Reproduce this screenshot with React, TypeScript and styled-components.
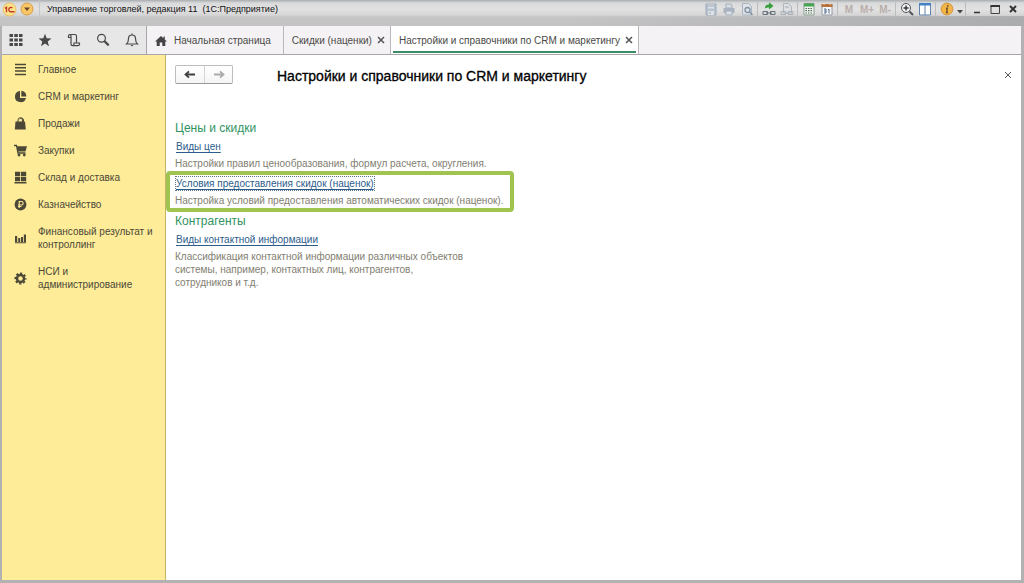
import React from "react";
import styled, { createGlobalStyle, css } from "styled-components";

const GlobalStyle = createGlobalStyle`
  * { box-sizing: border-box; }
  body {
    margin: 0;
    font-family: "Liberation Sans", Arial, sans-serif;
    font-size: 10px;
    line-height: 13px;
    color: #4a4a45;
    background: #ffffff;
  }
  button { font: inherit; color: inherit; border: 0; padding: 0; background: none; cursor: pointer; }
  svg { display: block; flex: none; }
`;

const Window = styled.div`
  min-height: 100vh;
  display: flex;
  flex-direction: column;
  border: solid #b3b1b1;
  border-width: 0 3px 3px 2px;
  background: #fff;
`;

const TitleBar = styled.header`
  height: 26px;
  flex: none;
  display: flex;
  align-items: flex-start;
  margin: 0 -3px 0 -2px;
  padding: 0 2px 0 0;
  background:
    linear-gradient(90deg, rgba(150, 152, 155, 0) 55%, rgba(130, 134, 138, 0.4) 100%) 0 16px / 100% 10px no-repeat,
    linear-gradient(#a9adaf 0, #d9dadb 3px, #e2e2e3 9px, #d6d6d7 15px, #c6c6c7 17px, #c3c3c4 26px);
`;

const AppButton = styled.button`
  width: 18px;
  height: 18px;
  display: grid;
  place-items: center;
`;

const AppTitle = styled.div`
  flex: 1;
  min-width: 0;
  margin-left: 3px;
  padding: 3px 0 0 7px;
  border-left: 1px solid #c4c5c7;
  height: 18px;
  font-size: 9px;
  color: #111;
  white-space: nowrap;
  overflow: hidden;
`;

const Tool = styled.button<{ $w?: number; $faded?: boolean }>`
  width: ${(p) => p.$w ?? 18}px;
  height: 18px;
  display: grid;
  place-items: center;
  font-weight: bold;
  color: ${(p) => (p.$faded ? "#b9aea9" : "#333")};
`;

const ToolSeparator = styled.span`
  width: 4px;
  height: 14px;
  margin-top: 2px;
  flex: none;
  background: linear-gradient(90deg, transparent 1px, #bcbdbf 1px, #bcbdbf 2px, transparent 2px);
`;

const TabBar = styled.nav`
  display: flex;
  height: 29px;
  flex: none;
  background: #f5f2f5;
  border-bottom: 1px solid #a9a5a9;
`;

const QuickTools = styled.div`
  display: flex;
  width: 145px;
  background: #e6e7e6;
  border-right: 1px solid #a5a5a5;
`;

const QuickButton = styled.button`
  flex: 1;
  display: grid;
  place-items: center;
  color: #484848;
`;

const Tab = styled.div<{ $active?: boolean }>`
  display: flex;
  align-items: center;
  gap: 5px;
  padding: 0 5px 0 8px;
  border-right: 1px solid #bbb7bb;
  white-space: nowrap;
  ${(p) =>
    p.$active &&
    css`
      background: linear-gradient(#3c8c67, #3c8c67) 2px 25px / calc(100% - 4px) 2px no-repeat, #fff;
    `}
`;

const TabLabel = styled.button<{ $home?: boolean }>`
  display: flex;
  align-items: center;
  gap: 7px;
  height: 28px;
  padding: 1px ${(p) => (p.$home ? "7px" : "0")} 0 0;
`;

const CloseButton = styled.button`
  width: 8px;
  height: 14px;
  display: grid;
  place-items: center;
  color: #555;
`;

const Body = styled.div`
  flex: 1;
  display: flex;
`;

const Sidebar = styled.nav`
  width: 164px;
  flex: none;
  padding-top: 1px;
  background: #feec98;
  border-right: 1px solid #c3b568;
`;

const SideItem = styled.a`
  display: flex;
  align-items: center;
  gap: 11px;
  padding: 7px 6px 7px 12px;
  color: #4b4838;
  text-decoration: none;
`;

const Main = styled.main`
  flex: 1;
  min-width: 0;
`;

const PageHeader = styled.div`
  display: flex;
  align-items: center;
  height: 39px;
  padding: 0 9px;
`;

const History = styled.div`
  display: flex;
  border: 1px solid #bdbdbd;
  border-bottom-color: #999;
  border-radius: 2px;
  background: linear-gradient(#fff, #f5f5f5);
`;

const HistoryButton = styled.button`
  width: 28px;
  height: 17px;
  display: grid;
  place-items: center;
  color: #3f3f3f;
  & + & { border-left: 1px solid #d5d5d5; }
  &:disabled { color: #aaa; }
`;

const PageTitle = styled.h1`
  flex: 1;
  margin: 2px 0 0 44px;
  font-size: 14px;
  line-height: 18px;
  font-weight: normal;
  color: #000;
  -webkit-text-stroke: 0.3px #000;
`;

const Sections = styled.div`
  padding-top: 26px;
`;

const SectionTitle = styled.h2`
  margin: 0 0 4px;
  padding-left: 9px;
  font-size: 12px;
  line-height: 16px;
  font-weight: normal;
  color: #31935f;
`;

const Entry = styled.div<{ $framed?: boolean }>`
  width: fit-content;
  max-width: 349px;
  padding: 0 9px 1px;
  ${(p) =>
    p.$framed &&
    css`
      padding: 2px 7px 1px 5px;
      border: 4px solid #a1c34f;
      border-radius: 4px;
      margin-bottom: 1px;
    `}
`;

const EntryLink = styled.a<{ $focused?: boolean }>`
  display: block;
  width: fit-content;
  margin: 0 0 4px 1px;
  color: #2c5c8c;
  text-decoration: underline;
  text-underline-offset: 2px;
  ${(p) => p.$focused && "outline: 1px dotted #60758a;"}
`;

const EntryText = styled.p<{ $narrow?: boolean }>`
  margin: 0;
  color: #827e70;
  ${(p) => p.$narrow && "max-width: 290px;"}
`;

const ICONS: Record<string, React.ReactNode> = {
  menu: <path d="M1 1.500h11M1 4.800h11M1 8.100h11M1 11.400h11" stroke="currentColor" strokeWidth="1.500" />,
  pie: (
    <>
      <path d="M6 1a5.600 5.600 0 1 0 6 7H6Z" fill="currentColor" />
      <path d="M7.300.8a5.200 5.200 0 0 1 5 5.600h-5Z" fill="currentColor" />
    </>
  ),
  bag: (
    <>
      <path d="M1.500 4.500h9.500l.8 8H.8Z" fill="currentColor" />
      <path d="M4 5V3a2.200 2.200 0 0 1 4.400 0v2M5.800 2a2 2 0 0 1 3.700 1V5" fill="none" stroke="currentColor" />
    </>
  ),
  cart: (
    <>
      <path d="M0 1.500h2.500l1.500 7.500h7.500" fill="none" stroke="currentColor" strokeWidth="1.300" />
      <path d="M3 2.300h10l-1.500 5.200H4Z" fill="currentColor" />
      <circle cx="5" cy="11" r="1.400" fill="currentColor" />
      <circle cx="10.300" cy="11" r="1.400" fill="currentColor" />
    </>
  ),
  stock: <path d="M1 .8h5.200v4.400H1ZM7 .8h5.200v4.400H7ZM1 6h5.200v4.200H1ZM7 6h5.200v4.200H7ZM.500 11h12v1.400H.500Z" fill="currentColor" />,
  ruble: (
    <>
      <circle cx="6.500" cy="6.500" r="5.900" fill="currentColor" />
      <path d="M5.200 10V3.500h2.200a1.700 1.700 0 0 1 0 3.500H4M4 8.500h3.500" fill="none" stroke="#feec98" strokeWidth="1.100" />
    </>
  ),
  bars: <path d="M1 4h2.200v6H1ZM4.200 6h2v4h-2ZM7 5h2v5H7ZM9.800 2.500H12V10H9.800ZM1 10.300h11v1H1Z" fill="currentColor" />,
  gear: (
    <>
      <circle cx="6.500" cy="6.500" r="3.500" fill="none" stroke="currentColor" strokeWidth="2.400" />
      <circle cx="6.500" cy="6.500" r="5.100" fill="none" stroke="currentColor" strokeWidth="1.900" strokeDasharray="2.200 1.805" strokeDashoffset="1.100" />
    </>
  ),
};

const SIDE_ITEMS: [string, string][] = [
  ["menu", "Главное"],
  ["pie", "CRM и маркетинг"],
  ["bag", "Продажи"],
  ["cart", "Закупки"],
  ["stock", "Склад и доставка"],
  ["ruble", "Казначейство"],
  ["bars", "Финансовый результат и контроллинг"],
  ["gear", "НСИ и администрирование"],
];

const Cross = ({ w = 1.5 }: { w?: number }) => (
  <svg width="8" height="8" viewBox="0 0 8 8">
    <path d="M1 1l6 6M7 1l-6 6" stroke="currentColor" strokeWidth={w} />
  </svg>
);

const Arrow = ({ flip }: { flip?: boolean }) => (
  <svg width="12" height="9" viewBox="0 0 12 9">
    <path
      d={flip ? "M1 4.500h9M7 1.300l3.500 3.200L7 7.700" : "M11 4.500H2M5 1.300L1.500 4.500 5 7.700"}
      fill="none"
      stroke="currentColor"
      strokeWidth="1.800"
    />
  </svg>
);

const Glyph = ({ children, size = 14 }: { children: React.ReactNode; size?: number }) => (
  <svg width={size} height={size} viewBox={`0 0 14 14`} fill="none">
    {children}
  </svg>
);

const WindowTools = () => (
  <>
    <Tool aria-label="Сохранить">
      <Glyph>
        <path d="M2 2h10v11H2Z" fill="#b8c3d0" stroke="#9caaba" />
        <path d="M4 2.500h6v4H4ZM4 9h6v4H4Z" fill="#dce1e6" />
        <path d="M4 4h6M5 11h2" stroke="#9caaba" />
      </Glyph>
    </Tool>
    <Tool aria-label="Печать">
      <Glyph>
        <path d="M4 2h5l1 1v3H4Z" fill="#d8dde3" stroke="#a5b0bd" />
        <path d="M1.500 6h11v5h-11Z" fill="#a9b4c0" />
        <path d="M4 9h6v4H4Z" fill="#dce1e6" stroke="#a5b0bd" />
      </Glyph>
    </Tool>
    <Tool aria-label="Предварительный просмотр">
      <Glyph>
        <path d="M2.500 1.500h6l3 3v8.500h-9Z" fill="#dfe3e7" stroke="#a9b4c0" />
        <circle cx="7.500" cy="8" r="2.500" stroke="#8292a4" strokeWidth="1.300" />
        <path d="M9.500 10l3 3" stroke="#8292a4" strokeWidth="1.500" />
      </Glyph>
    </Tool>
    <ToolSeparator />
    <Tool aria-label="Получить ссылку">
      <Glyph>
        <path d="M3 6.500c0-3.500 2-4 4-4V.3l4.500 3.700-4.500 3.500V5.500C5 5.500 4.500 5.500 3 6.500Z" fill="#35a03b" />
        <path d="M1 9.500h4.500v3H1ZM8.500 9.500H13v3H8.500ZM4 11h6" stroke="#66707a" />
      </Glyph>
    </Tool>
    <Tool aria-label="Перейти по ссылке">
      <Glyph>
        <path d="M3.500 1.500h5l3 3V11h-8Z" fill="#dcdfe2" stroke="#b1b7be" />
        <path d="M1 9.500h4.500v3H1ZM8.500 9.500H13v3H8.500ZM5 11h4M5 5h4" stroke="#a9b0b8" />
      </Glyph>
    </Tool>
    <ToolSeparator />
    <Tool aria-label="Калькулятор">
      <Glyph>
        <path d="M2 1.500h10V13H2Z" fill="#f0f4ee" stroke="#8b9d90" />
        <path d="M2 1.500h10v3H2Z" fill="#45a552" />
        <path d="M3.500 6.500h7M3.500 8.700h7M3.500 11h7" stroke="#4e6b5a" strokeWidth="1.200" strokeDasharray="1.500 1" />
      </Glyph>
    </Tool>
    <Tool aria-label="Календарь">
      <Glyph>
        <path d="M2 2.500h10V13H2Z" fill="#f6f7f8" stroke="#9299a3" />
        <path d="M1.500 2h11v3h-11Z" fill="#b8703b" />
        <path d="M4 1v2M10 1v2" stroke="#edd3bd" />
        <path d="M4 7h2v4M4 9h2M4 11h2M8 8l1-1v4.500" stroke="#506a8d" />
      </Glyph>
    </Tool>
    <ToolSeparator />
    <Tool $faded>M</Tool>
    <Tool $faded>M+</Tool>
    <Tool $faded>M-</Tool>
    <ToolSeparator />
    <Tool aria-label="Масштаб">
      <Glyph>
        <circle cx="6" cy="6" r="4.500" fill="#f2f4f5" stroke="#4e5357" />
        <path d="M3.500 6h5M6 3.500v5" stroke="#333" strokeWidth="1.400" />
        <path d="M9.500 9.500l3.500 3.500" stroke="#4e5357" strokeWidth="2" />
      </Glyph>
    </Tool>
    <Tool aria-label="Панели">
      <Glyph>
        <path d="M1.500 1.500h11V13h-11Z" fill="#fff" stroke="#5f83ad" />
        <path d="M1 1h12v2.500H1Z" fill="#4683c4" />
        <path d="M7 3v10" stroke="#5f83ad" />
      </Glyph>
    </Tool>
    <ToolSeparator />
    <Tool aria-label="Справка">
      <Glyph>
        <circle cx="7" cy="7" r="5.900" fill="#f3b548" stroke="#d2943a" />
        <path d="M7.800 3v1.700M6 6.200h1.300L6.600 10.500H8" stroke="#6e532a" strokeWidth="1.400" />
      </Glyph>
    </Tool>
    <Tool $w={8} aria-label="Ещё">
      <svg width="6" height="9" viewBox="0 0 6 9">
        <path d="M0 5h6L3 8.500Z" fill="#444" />
      </svg>
    </Tool>
    <ToolSeparator />
    <Tool aria-label="Свернуть">
      <Glyph><path d="M4 10.500h6" stroke="#333" strokeWidth="1.500" /></Glyph>
    </Tool>
    <Tool aria-label="Развернуть">
      <Glyph><path d="M3 4h8.500v7.500H3Z" stroke="#444" /><path d="M2.500 4h9.500" stroke="#333" strokeWidth="2" /></Glyph>
    </Tool>
    <Tool aria-label="Закрыть окно">
      <Cross w={2} />
    </Tool>
  </>
);

export default function App() {
  return (
    <>
      <GlobalStyle />
      <Window>
        <TitleBar>
          <AppButton aria-label="1С">
            <svg width="15" height="15" viewBox="0 0 15 15">
              <circle cx="7.500" cy="7.500" r="6.500" fill="#fbe489" stroke="#e9bd6a" />
              <path d="M3 6.300l1.500-1v5M10.500 6a2.200 2.200 0 1 0-1.500 3.800h3.500" fill="none" stroke="#c83a28" strokeWidth="1.400" />
            </svg>
          </AppButton>
          <AppButton aria-label="Главное меню">
            <svg width="14" height="14" viewBox="0 0 14 14">
              <circle cx="7" cy="7" r="6" fill="#f8c768" stroke="#da9b42" />
              <path d="M4 5.500h6L7 9Z" fill="#6c4525" />
            </svg>
          </AppButton>
          <AppTitle>Управление торговлей, редакция 11&nbsp; (1С:Предприятие)</AppTitle>
          <WindowTools />
        </TitleBar>

        <TabBar>
          <QuickTools>
            <QuickButton aria-label="Меню функций">
              <Glyph>
                <path
                  d="M.5 1h3.500v3H.5ZM5.300 1h3.500v3H5.300ZM10 1h3.500v3H10ZM.5 5.500h3.500v3H.5ZM5.300 5.500h3.500v3H5.300ZM10 5.500h3.500v3H10ZM.5 10h3.500v3H.5ZM5.300 10h3.500v3H5.300ZM10 10h3.500v3H10Z"
                  fill="currentColor"
                />
              </Glyph>
            </QuickButton>
            <QuickButton aria-label="Избранное">
              <Glyph><path d="M7 .8l1.700 4.500 4.800.2-3.800 3 1.300 4.700L7 10.500l-4 2.700 1.300-4.700-3.800-3 4.800-.2Z" fill="currentColor" /></Glyph>
            </QuickButton>
            <QuickButton aria-label="История">
              <Glyph>
                <path
                  d="M4 4.500H1.500V3.200A1.600 1.600 0 0 1 3.100 1.500H8a1.500 1.500 0 0 1 1.500 1.500V10M4 4.500V11a1.600 1.600 0 0 0 1.600 1.600h5.300a1.600 1.600 0 0 0 1.600-1.600V10H7v1a1.600 1.600 0 0 1-1.400 1.600M4 4.500V3.200a1.600 1.600 0 0 0-.9-1.700"
                  stroke="currentColor"
                  strokeWidth="1.200"
                />
              </Glyph>
            </QuickButton>
            <QuickButton aria-label="Поиск">
              <Glyph>
                <circle cx="5.500" cy="5.200" r="3.900" stroke="currentColor" strokeWidth="1.200" />
                <path d="M8.300 8l4.400 4.400" stroke="currentColor" strokeWidth="2.200" />
              </Glyph>
            </QuickButton>
            <QuickButton aria-label="Оповещения">
              <Glyph>
                <path d="M1.500 11h11c-1.500-1.300-2-2-2-5.500C10.500 3.500 9 2 7 2S3.500 3.500 3.500 5.500C3.500 9 3 9.700 1.500 11ZM7 2V.5" stroke="currentColor" strokeWidth="1.200" />
                <path d="M5.500 12h3L7 13.500Z" fill="currentColor" />
              </Glyph>
            </QuickButton>
          </QuickTools>
          <Tab>
            <TabLabel $home>
              <svg width="12" height="12" viewBox="0 0 12 12">
                <path d="M6 1L0 6.500h1.700V11h3V7.500h2.600V11h3V6.500H12L9.800 4.500V1.500H8.500v1.700Z" fill="#444" />
              </svg>
              Начальная страница
            </TabLabel>
          </Tab>
          <Tab>
            <TabLabel>Скидки (наценки)</TabLabel>
            <CloseButton aria-label="Закрыть вкладку"><Cross /></CloseButton>
          </Tab>
          <Tab $active>
            <TabLabel>Настройки и справочники по CRM и маркетингу</TabLabel>
            <CloseButton aria-label="Закрыть вкладку"><Cross /></CloseButton>
          </Tab>
        </TabBar>

        <Body>
          <Sidebar>
            {SIDE_ITEMS.map(([icon, label]) => (
              <SideItem href="#" key={label}>
                <svg width="13" height="13" viewBox="0 0 13 13">{ICONS[icon]}</svg>
                <span>{label}</span>
              </SideItem>
            ))}
          </Sidebar>
          <Main>
            <PageHeader>
              <History>
                <HistoryButton aria-label="Назад"><Arrow /></HistoryButton>
                <HistoryButton aria-label="Вперёд" disabled><Arrow flip /></HistoryButton>
              </History>
              <PageTitle>Настройки и справочники по CRM и маркетингу</PageTitle>
              <CloseButton aria-label="Закрыть"><Cross w={1} /></CloseButton>
            </PageHeader>
            <Sections>
              <SectionTitle>Цены и скидки</SectionTitle>
              <Entry>
                <EntryLink href="#">Виды цен</EntryLink>
                <EntryText>Настройки правил ценообразования, формул расчета, округления.</EntryText>
              </Entry>
              <Entry $framed>
                <EntryLink href="#" $focused>Условия предоставления скидок (наценок)</EntryLink>
                <EntryText>Настройка условий предоставления автоматических скидок (наценок).</EntryText>
              </Entry>
              <SectionTitle>Контрагенты</SectionTitle>
              <Entry>
                <EntryLink href="#">Виды контактной информации</EntryLink>
                <EntryText $narrow>
                  Классификация контактной информации различных объектов системы, например, контактных лиц, контрагентов,
                  сотрудников и т.д.
                </EntryText>
              </Entry>
            </Sections>
          </Main>
        </Body>
      </Window>
    </>
  );
}
